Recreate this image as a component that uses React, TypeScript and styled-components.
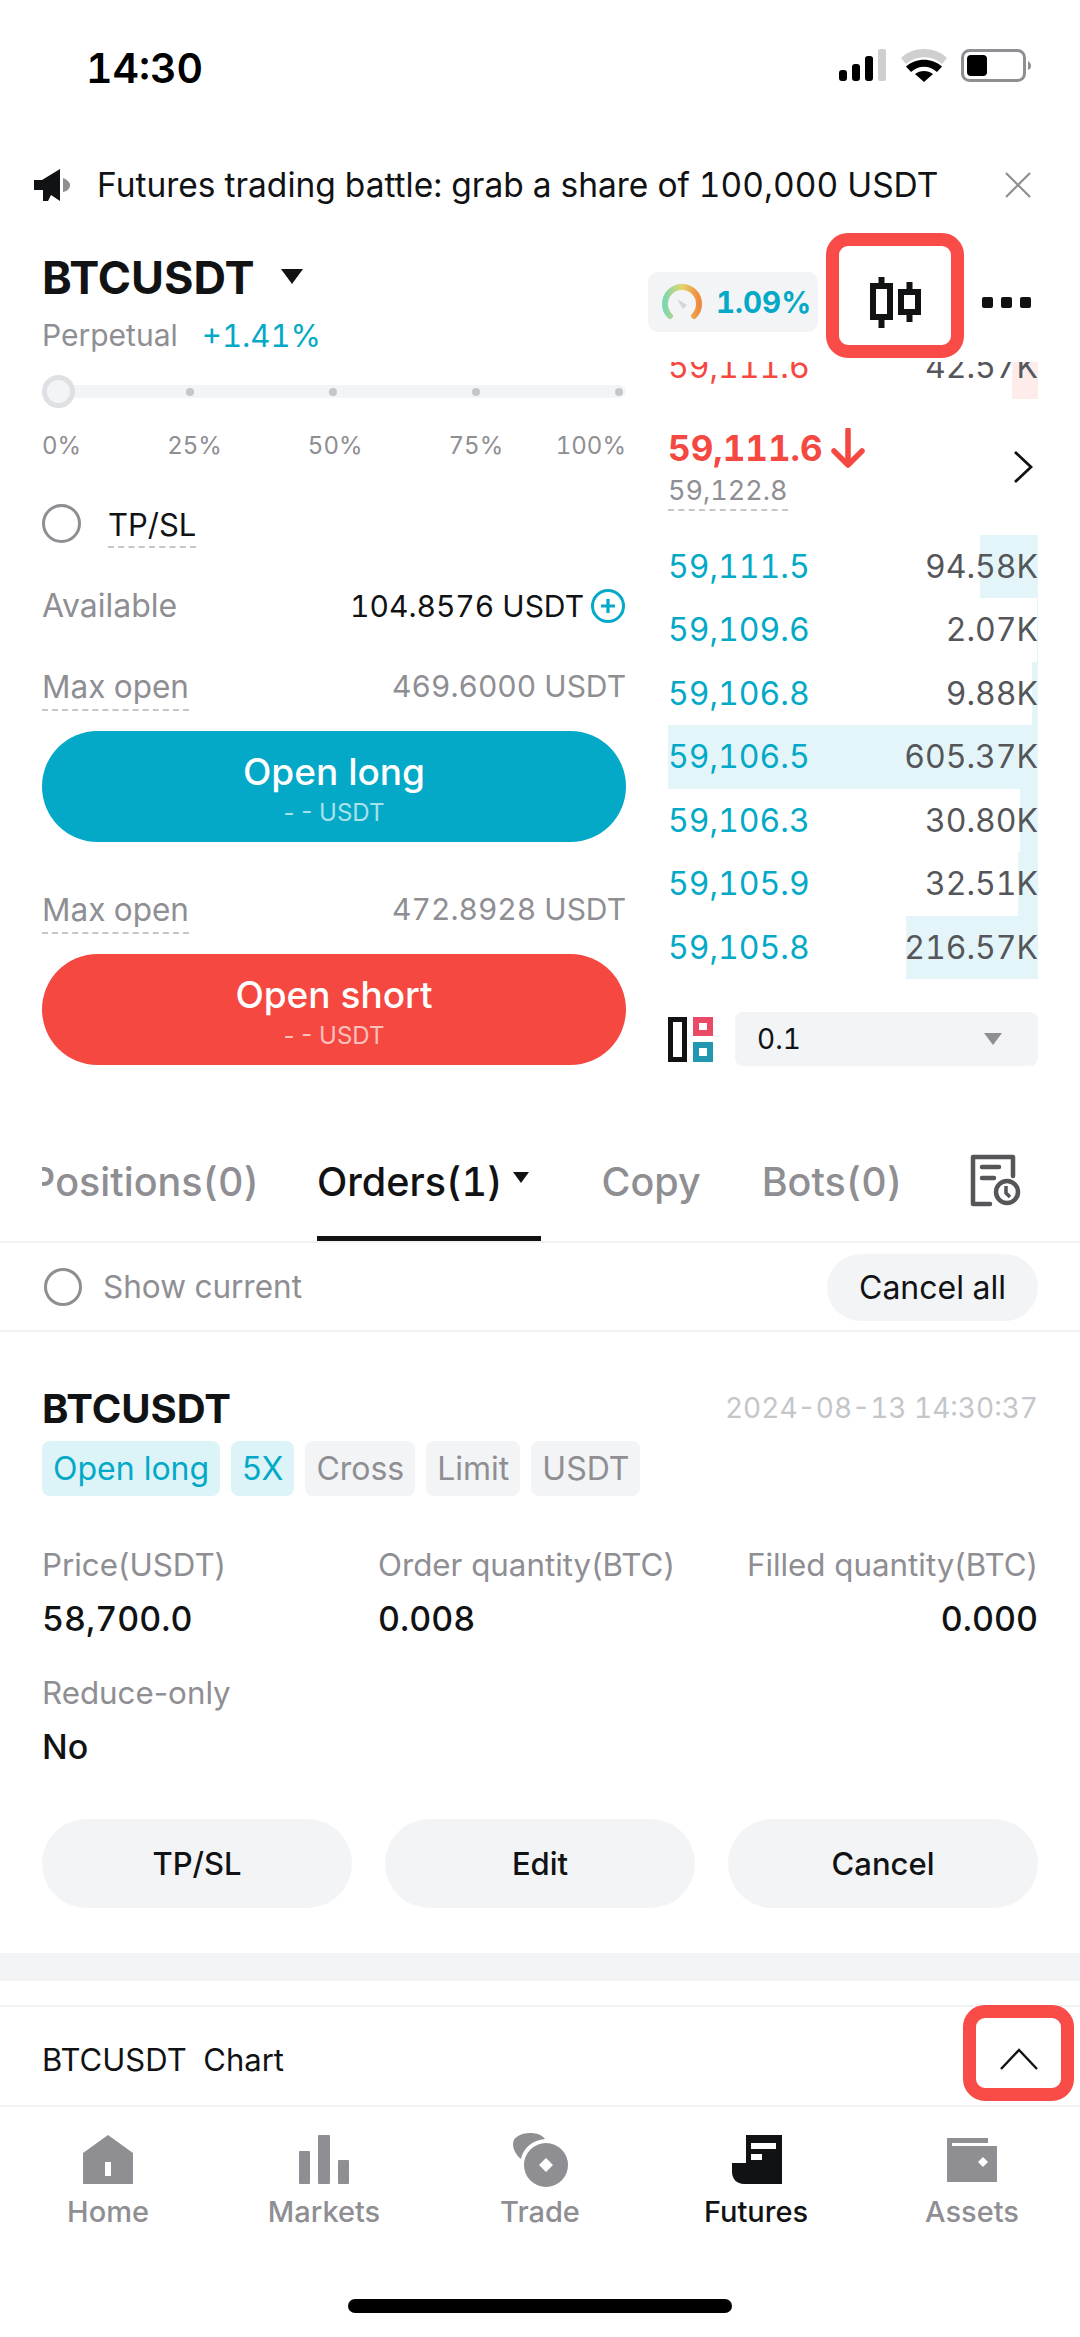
import styled, { createGlobalStyle } from "styled-components";

const GlobalStyle = createGlobalStyle`
  html, body {
    margin: 0;
    padding: 0;
    background: #fff;
  }
  * {
    box-sizing: border-box;
  }
`;

const BLACK = "#111214";
const GRAY = "#8e8e93";
const TEAL = "#03a9c7";
const RED = "#f44840";
const SOFT = "#f3f4f6";

const Page = styled.div`
  width: 1080px;
  height: 2337px;
  overflow: hidden;
  display: flex;
  flex-direction: column;
  background: #fff;
  color: ${BLACK};
  font-family: Inter, "Liberation Sans", sans-serif;
  font-variant-numeric: tabular-nums;
`;

/* Status bar */
const StatusBar = styled.div`
  height: 136px;
  flex-shrink: 0;
  display: flex;
  justify-content: space-between;
  align-items: flex-start;
  padding: 44px 49px 0 86px;
`;

const Clock = styled.div`
  font-size: 41px;
  line-height: 48px;
  font-weight: 600;
  color: #000;
`;

const StatusIcons = styled.svg`
  width: 194px;
  height: 40px;
  margin-top: 5px;
`;

/* Banner */
const Banner = styled.div`
  height: 98px;
  flex-shrink: 0;
  display: flex;
  align-items: center;
  padding: 0 49px 0 34px;
  gap: 27px;
`;

const BannerText = styled.div`
  flex: 1;
  font-size: 33.5px;
  white-space: nowrap;
`;

/* Trade area */
const TradeGrid = styled.div`
  height: 896px;
  flex-shrink: 0;
  display: grid;
  grid-template-columns: 584px 370px;
  column-gap: 42px;
  padding: 0 42px;
`;

const LeftColumn = styled.div`
  display: flex;
  flex-direction: column;
`;

const TitleRow = styled.div`
  height: 86px;
  display: flex;
  align-items: center;
  gap: 26px;
`;

const Symbol = styled.div`
  font-size: 45px;
  font-weight: 700;
`;

const Caret = styled.span<{ $size: number; $color?: string; $top?: number }>`
  width: 0;
  height: 0;
  margin-top: ${(p) => p.$top ?? 0}px;
  border-left: ${(p) => p.$size}px solid transparent;
  border-right: ${(p) => p.$size}px solid transparent;
  border-top: ${(p) => p.$size * 1.4}px solid ${(p) => p.$color ?? BLACK};
  flex-shrink: 0;
`;

const PerpRow = styled.div`
  height: 30px;
  display: flex;
  align-items: center;
  gap: 24px;
  font-size: 30px;
  color: ${GRAY};
`;

const Change = styled.span`
  font-size: 31px;
  color: ${TEAL};
`;

const Slider = styled.div`
  margin-top: 25px;
  height: 33px;
  position: relative;
  display: flex;
  align-items: center;
  justify-content: flex-end;
  padding-right: 3px;
  gap: 135px;
  &::before {
    content: "";
    position: absolute;
    left: 0;
    right: 0;
    top: 10px;
    height: 13px;
    border-radius: 7px;
    background: ${SOFT};
  }
`;

const SliderThumb = styled.span`
  position: absolute;
  left: 0;
  top: 0;
  width: 33px;
  height: 33px;
  border-radius: 50%;
  background: ${SOFT};
  border: 5px solid #dfe0e3;
`;

const SliderDot = styled.span`
  position: relative;
  width: 8px;
  height: 8px;
  border-radius: 50%;
  background: #c4c6ca;
`;

const SliderLabels = styled.div`
  margin-top: 22px;
  height: 30px;
  display: flex;
  align-items: center;
  font-size: 24px;
  color: ${GRAY};
  span + span {
    margin-left: 86px;
  }
  span:last-child {
    margin-left: auto;
  }
`;

const TpRow = styled.div`
  margin-top: 44px;
  height: 44px;
  display: flex;
  align-items: flex-start;
  gap: 27px;
`;

const Radio = styled.span<{ $size: number }>`
  width: ${(p) => p.$size}px;
  height: ${(p) => p.$size}px;
  border-radius: 50%;
  border: 3px solid ${GRAY};
  flex-shrink: 0;
`;

const Dashed = styled.span<{ $color?: string; $size: number; $height: number }>`
  display: inline-block;
  height: ${(p) => p.$height}px;
  line-height: ${(p) => p.$height - 2}px;
  font-size: ${(p) => p.$size}px;
  color: ${(p) => p.$color ?? BLACK};
  border-bottom: 2px dashed #c4c6ca;
`;

const InfoRow = styled.div<{ $top: number }>`
  margin-top: ${(p) => p.$top}px;
  min-height: 40px;
  display: flex;
  justify-content: space-between;
  align-items: flex-start;
  font-size: 30px;
  line-height: 42px;
  color: ${GRAY};
`;

const InfoLabel = styled.span`
  font-size: 32px;
`;

const Balance = styled.span`
  display: flex;
  align-items: center;
  gap: 6px;
  color: ${BLACK};
`;

const OpenButton = styled.div<{ $bg: string; $top: number }>`
  margin-top: ${(p) => p.$top}px;
  height: 111px;
  border-radius: 56px;
  background: ${(p) => p.$bg};
  color: #fff;
  display: flex;
  flex-direction: column;
  align-items: center;
  padding-top: 18px;
`;

const OpenLabel = styled.div`
  font-size: 37px;
  line-height: 46px;
  font-weight: 500;
`;

const OpenSub = styled.div`
  font-size: 24px;
  line-height: 30px;
  margin-top: 3px;
  opacity: 0.65;
  font-variant-numeric: normal;
`;

/* Order book */
const RightColumn = styled.div`
  display: flex;
  flex-direction: column;
`;

const Toolbar = styled.div`
  height: 128px;
  margin-left: -20px;
  padding-top: 8px;
  display: flex;
  align-items: center;
`;

const FundingChip = styled.div`
  width: 170px;
  height: 60px;
  border-radius: 10px;
  background: ${SOFT};
  display: flex;
  align-items: center;
  gap: 14px;
  padding-left: 14px;
  font-size: 29.5px;
  font-weight: 700;
  color: ${TEAL};
`;

const CandleSlot = styled.div`
  position: relative;
  width: 138px;
  height: 60px;
  margin-left: 8px;
  display: flex;
  align-items: center;
  justify-content: center;
`;

const Highlight = styled.span<{ $top: number; $bottom: number }>`
  position: absolute;
  left: 0;
  right: 0;
  top: ${(p) => p.$top}px;
  bottom: ${(p) => p.$bottom}px;
  border: 13px solid #f94c48;
  border-radius: 22px;
`;

const MoreDots = styled.div`
  margin-left: 18px;
  display: flex;
  gap: 8px;
  span {
    width: 11px;
    height: 11px;
    border-radius: 2px;
    background: ${BLACK};
  }
`;

const Book = styled.div`
  height: 617px;
  overflow: hidden;
  display: flex;
  flex-direction: column;
  justify-content: flex-end;
`;

const BookRow = styled.div<{ $depth: number; $bar: string }>`
  height: 63.5px;
  flex-shrink: 0;
  display: flex;
  justify-content: space-between;
  align-items: center;
  font-size: 32px;
  color: #55565a;
  background: linear-gradient(
    to left,
    ${(p) => p.$bar} ${(p) => p.$depth}px,
    transparent ${(p) => p.$depth}px
  );
`;

const BookPrice = styled.span<{ $color: string }>`
  color: ${(p) => p.$color};
`;

const MidBlock = styled.div`
  height: 136px;
  flex-shrink: 0;
  display: flex;
  justify-content: space-between;
  align-items: center;
  padding-right: 5px;
`;

const MidLeft = styled.div`
  display: flex;
  flex-direction: column;
  align-items: flex-start;
`;

const MidPrice = styled.div`
  display: flex;
  align-items: center;
  gap: 8px;
  height: 50px;
  font-size: 35px;
  font-weight: 700;
  color: ${RED};
`;

const DepthSelect = styled.div`
  margin-top: 33px;
  display: flex;
  align-items: center;
  gap: 22px;
`;

const SelectBox = styled.div`
  flex: 1;
  height: 54px;
  border-radius: 8px;
  background: ${SOFT};
  display: flex;
  align-items: center;
  justify-content: space-between;
  padding: 0 36px 0 22px;
  font-size: 28px;
`;

/* Tabs */
const Tabs = styled.div`
  height: 113px;
  flex-shrink: 0;
  display: flex;
  border-bottom: 2px solid #f1f2f4;
  padding: 0 58px 0 42px;
  overflow: hidden;
  align-items: flex-start;
`;

const Tab = styled.div<{ $active?: boolean; $left: number }>`
  height: 111px;
  margin-left: ${(p) => p.$left}px;
  padding-top: 27px;
  padding-right: ${(p) => (p.$active ? 12 : 0)}px;
  display: flex;
  align-items: flex-start;
  gap: 11px;
  font-size: 39.5px;
  line-height: 50px;
  font-weight: 500;
  white-space: nowrap;
  flex-shrink: 0;
  color: ${(p) => (p.$active ? BLACK : GRAY)};
  border-bottom: 5px solid ${(p) => (p.$active ? BLACK : "transparent")};
`;

const TabClip = styled.div`
  width: 217px;
  flex-shrink: 0;
  overflow: hidden;
  display: flex;
  justify-content: flex-end;
`;

const TabIcon = styled.svg`
  width: 54px;
  height: 54px;
  margin: 24px 0 0 auto;
  flex-shrink: 0;
`;

const FilterRow = styled.div`
  height: 89px;
  flex-shrink: 0;
  display: flex;
  align-items: center;
  justify-content: space-between;
  border-bottom: 2px solid #f1f2f4;
  padding: 0 42px 0 44px;
`;

const ShowCurrent = styled.div`
  display: flex;
  align-items: center;
  gap: 21px;
  font-size: 31.5px;
  color: ${GRAY};
`;

const CancelAll = styled.div`
  width: 211px;
  height: 67px;
  margin-top: 2px;
  border-radius: 34px;
  background: ${SOFT};
  display: flex;
  align-items: center;
  justify-content: center;
  font-size: 32px;
`;

/* Order card */
const OrderCard = styled.div`
  padding: 51px 42px 0;
  flex-shrink: 0;
`;

const OrderHead = styled.div`
  height: 50px;
  display: flex;
  justify-content: space-between;
  align-items: center;
`;

const OrderSymbol = styled.div`
  font-size: 40px;
  font-weight: 700;
`;

const OrderTime = styled.div`
  font-size: 28px;
  color: #c4c6ca;
`;

const TagRow = styled.div`
  margin-top: 8px;
  display: flex;
  gap: 11px;
`;

const Tag = styled.span<{ $accent?: boolean }>`
  height: 55px;
  padding: 0 11px;
  border-radius: 8px;
  display: flex;
  align-items: center;
  font-size: 32px;
  font-variant-numeric: normal;
  background: ${(p) => (p.$accent ? "#dcf3f7" : SOFT)};
  color: ${(p) => (p.$accent ? TEAL : GRAY)};
`;

const DetailGrid = styled.div`
  margin-top: 49px;
  display: grid;
  grid-template-columns: 336px 1fr auto;
  row-gap: 34px;
`;

const Detail = styled.div<{ $right?: boolean }>`
  display: flex;
  flex-direction: column;
  gap: 14px;
  align-items: ${(p) => (p.$right ? "flex-end" : "flex-start")};
`;

const DetailLabel = styled.div`
  font-size: 31.3px;
  line-height: 40px;
  color: ${GRAY};
  font-variant-numeric: normal;
`;

const DetailValue = styled.div`
  font-size: 34px;
  line-height: 40px;
  font-weight: 500;
`;

const ActionRow = styled.div`
  margin-top: 52px;
  display: grid;
  grid-template-columns: repeat(3, 310px);
  justify-content: space-between;
`;

const ActionButton = styled.div`
  height: 89px;
  border-radius: 45px;
  background: ${SOFT};
  display: flex;
  align-items: center;
  justify-content: center;
  font-size: 31px;
  font-weight: 500;
`;

const Band = styled.div`
  margin-top: 45px;
  height: 28px;
  flex-shrink: 0;
  background: ${SOFT};
`;

const ChartRow = styled.div`
  margin-top: 24px;
  height: 102px;
  flex-shrink: 0;
  border-top: 2px solid #f1f2f4;
  border-bottom: 2px solid #f1f2f4;
  display: flex;
  align-items: center;
  justify-content: space-between;
  padding: 6px 6px 0 42px;
  font-size: 31px;
  white-space: pre;
`;

const ChevronSlot = styled.div`
  position: relative;
  width: 111px;
  height: 60px;
  display: flex;
  align-items: center;
  justify-content: center;
`;

/* Bottom navigation */
const Nav = styled.div`
  display: grid;
  grid-template-columns: repeat(5, 216px);
  padding-top: 23px;
  flex-shrink: 0;
`;

const NavItem = styled.div<{ $active?: boolean }>`
  display: flex;
  flex-direction: column;
  align-items: center;
  gap: 7px;
  font-size: 29px;
  line-height: 30px;
  font-weight: 500;
  color: ${(p) => (p.$active ? BLACK : GRAY)};
  svg {
    width: 60px;
    height: 60px;
    fill: currentColor;
  }
`;

const HomeBar = styled.div`
  width: 384px;
  height: 14px;
  border-radius: 7px;
  background: #000;
  margin: auto auto 24px;
`;

const asks = [{ price: "59,111.6", size: "42.57K", depth: 26 }];

const bids = [
  { price: "59,111.5", size: "94.58K", depth: 58 },
  { price: "59,109.6", size: "2.07K", depth: 1 },
  { price: "59,106.8", size: "9.88K", depth: 6 },
  { price: "59,106.5", size: "605.37K", depth: 370 },
  { price: "59,106.3", size: "30.80K", depth: 18 },
  { price: "59,105.9", size: "32.51K", depth: 20 },
  { price: "59,105.8", size: "216.57K", depth: 132 },
];

const tags = ["Cross", "Limit", "USDT"];

function SignalWifiBattery() {
  return (
    <StatusIcons viewBox="0 0 194 40">
      <rect x="2" y="21" width="8" height="11" rx="3" fill="#000" />
      <rect x="15" y="15" width="8" height="17" rx="3" fill="#000" />
      <rect x="28" y="7" width="8" height="25" rx="3" fill="#000" />
      <rect x="41" y="0" width="8" height="32" rx="2" fill="#cfcfcf" />
      <path d="M64 9 C76 -3 98 -3 110 9 L105 15 C95 6 79 6 69 15 Z" fill="#cfcfcf" />
      <path d="M69 15.5 C79 6.5 95 6.5 105 15.5 L100 21 C92 14 82 14 74 21 Z" fill="#000" transform="translate(0 2)" />
      <path d="M78 25 C83 21 91 21 96 25 L87 33 Z" fill="#000" />
      <rect x="125.5" y="1.5" width="62" height="30" rx="7" fill="none" stroke="#8e8e93" strokeWidth="3" />
      <rect x="130" y="6" width="20" height="21" rx="4" fill="#000" />
      <path d="M191 12 C193 13 194 15 194 17 C194 19 193 20 191 21 Z" fill="#8e8e93" />
    </StatusIcons>
  );
}

export default function App() {
  return (
    <>
      <GlobalStyle />
      <Page>
        <StatusBar>
          <Clock>14:30</Clock>
          <SignalWifiBattery />
        </StatusBar>

        <Banner>
          <svg width="36" height="32" viewBox="0 0 36 32">
            <path d="M0 11 H8 L26 0 V32 L17 26 L14 32 H9 L9 21 H0 Z" fill="#111214" />
            <path d="M29 9 C34 11 36 14 36 16 C36 19 34 22 29 23 Z" fill="#8e8e93" />
          </svg>
          <BannerText>Futures trading battle: grab a share of 100,000 USDT</BannerText>
          <svg width="26" height="26" viewBox="0 0 26 26">
            <path d="M1 1 L25 25 M25 1 L1 25" stroke="#8e8e93" strokeWidth="2.2" fill="none" />
          </svg>
        </Banner>

        <TradeGrid>
          <LeftColumn>
            <TitleRow>
              <Symbol>BTCUSDT</Symbol>
              <Caret $size={11} $top={-2} />
            </TitleRow>
            <PerpRow>
              Perpetual <Change>+1.41%</Change>
            </PerpRow>
            <Slider>
              <SliderThumb />
              <SliderDot />
              <SliderDot />
              <SliderDot />
              <SliderDot />
            </Slider>
            <SliderLabels>
              <span>0%</span>
              <span>25%</span>
              <span>50%</span>
              <span>75%</span>
              <span>100%</span>
            </SliderLabels>
            <TpRow>
              <Radio $size={39} />
              <Dashed $size={31} $height={44}>
                TP/SL
              </Dashed>
            </TpRow>
            <InfoRow $top={37}>
              <InfoLabel>Available</InfoLabel>
              <Balance>
                104.8576 USDT
                <svg width="36" height="36" viewBox="0 0 36 36">
                  <circle cx="18" cy="18" r="15.5" fill="none" stroke={TEAL} strokeWidth="3" />
                  <path d="M11 18 H25 M18 11 V25" stroke={TEAL} strokeWidth="3.2" />
                </svg>
              </Balance>
            </InfoRow>
            <InfoRow $top={38}>
              <Dashed $size={31.5} $height={46} $color={GRAY}>
                Max open
              </Dashed>
              469.6000 USDT
            </InfoRow>
            <OpenButton $bg={TEAL} $top={20}>
              <OpenLabel>Open long</OpenLabel>
              <OpenSub>- - USDT</OpenSub>
            </OpenButton>
            <InfoRow $top={46}>
              <Dashed $size={31.5} $height={46} $color={GRAY}>
                Max open
              </Dashed>
              472.8928 USDT
            </InfoRow>
            <OpenButton $bg={RED} $top={20}>
              <OpenLabel>Open short</OpenLabel>
              <OpenSub>- - USDT</OpenSub>
            </OpenButton>
          </LeftColumn>

          <RightColumn>
            <Toolbar>
              <FundingChip>
                <svg width="40" height="36" viewBox="0 0 40 36">
                  <defs>
                    <linearGradient id="gauge" x1="0" y1="0" x2="1" y2="0">
                      <stop offset="0" stopColor="#7fd6b0" />
                      <stop offset="0.5" stopColor="#e6d56a" />
                      <stop offset="1" stopColor="#ef8a3c" />
                    </linearGradient>
                  </defs>
                  <path
                    d="M8 32 A17 17 0 1 1 32 32"
                    fill="none"
                    stroke="url(#gauge)"
                    strokeWidth="6"
                    strokeLinecap="round"
                  />
                  <path d="M15 15 L25 21 L21 25 Z" fill="#d4d5d8" />
                </svg>
                1.09%
              </FundingChip>
              <CandleSlot>
                <svg width="51" height="51" viewBox="0 0 51 51">
                  <rect x="3" y="9" width="17" height="31" fill="none" stroke="#111214" strokeWidth="6" />
                  <path d="M11.5 0 V9 M11.5 40 V51" stroke="#111214" strokeWidth="6" />
                  <rect x="31" y="15" width="17" height="20" fill="none" stroke="#111214" strokeWidth="6" />
                  <path d="M39.5 5 V15 M39.5 35 V45" stroke="#111214" strokeWidth="6" />
                </svg>
                <Highlight $top={-39} $bottom={-26} />
              </CandleSlot>
              <MoreDots>
                <span />
                <span />
                <span />
              </MoreDots>
            </Toolbar>

            <Book>
              {asks.map((row) => (
                <BookRow key={row.price} $depth={row.depth} $bar="#fdecea">
                  <BookPrice $color={RED}>{row.price}</BookPrice>
                  {row.size}
                </BookRow>
              ))}
              <MidBlock>
                <MidLeft>
                  <MidPrice>
                    59,111.6
                    <svg width="34" height="40" viewBox="0 0 34 40">
                      <path
                        d="M17 2 V36 M3 23 L17 37 L31 23"
                        fill="none"
                        stroke={RED}
                        strokeWidth="5.5"
                        strokeLinecap="round"
                        strokeLinejoin="round"
                      />
                    </svg>
                  </MidPrice>
                  <Dashed $size={27} $height={38} $color={GRAY}>
                    59,122.8
                  </Dashed>
                </MidLeft>
                <svg width="20" height="34" viewBox="0 0 20 34">
                  <path d="M2 2 L18 17 L2 32" fill="none" stroke="#111214" strokeWidth="2.8" />
                </svg>
              </MidBlock>
              {bids.map((row) => (
                <BookRow key={row.price} $depth={row.depth} $bar="#e4f5f9">
                  <BookPrice $color={TEAL}>{row.price}</BookPrice>
                  {row.size}
                </BookRow>
              ))}
            </Book>

            <DepthSelect>
              <svg width="45" height="45" viewBox="0 0 45 45">
                <rect x="2.5" y="2.5" width="14" height="40" fill="#fff" stroke="#111214" strokeWidth="5" />
                <rect x="25" y="0" width="20" height="19" fill="#ea4a66" />
                <rect x="31" y="6" width="8" height="7" fill="#fff" />
                <rect x="25" y="25" width="20" height="20" fill="#2298b0" />
                <rect x="31" y="31" width="8" height="8" fill="#fff" />
              </svg>
              <SelectBox>
                0.1
                <Caret $size={9} $color={GRAY} />
              </SelectBox>
            </DepthSelect>
          </RightColumn>
        </TradeGrid>

        <Tabs>
          <TabClip>
            <Tab $left={0}>Positions(0)</Tab>
          </TabClip>
          <Tab $active $left={58}>
            Orders(1)
            <Caret $size={8.5} $top={15} />
          </Tab>
          <Tab $left={60}>Copy</Tab>
          <Tab $left={61}>Bots(0)</Tab>
          <TabIcon viewBox="0 0 54 54">
            <path
              d="M22 50 H5 V3 H45 V22"
              fill="none"
              stroke="#55565a"
              strokeWidth="4.5"
              strokeLinecap="round"
              strokeLinejoin="round"
            />
            <path d="M14 13 H31 M14 24 H26" stroke="#55565a" strokeWidth="4.5" strokeLinecap="round" />
            <circle cx="39" cy="38" r="11" fill="#fff" stroke="#55565a" strokeWidth="4.5" />
            <path d="M38 32 V39 L42 43" fill="none" stroke="#55565a" strokeWidth="3.5" />
          </TabIcon>
        </Tabs>

        <FilterRow>
          <ShowCurrent>
            <Radio $size={38} />
            Show current
          </ShowCurrent>
          <CancelAll>Cancel all</CancelAll>
        </FilterRow>

        <OrderCard>
          <OrderHead>
            <OrderSymbol>BTCUSDT</OrderSymbol>
            <OrderTime>2024-08-13 14:30:37</OrderTime>
          </OrderHead>
          <TagRow>
            <Tag $accent>Open long</Tag>
            <Tag $accent>5X</Tag>
            {tags.map((tag) => (
              <Tag key={tag}>{tag}</Tag>
            ))}
          </TagRow>
          <DetailGrid>
            <Detail>
              <DetailLabel>Price(USDT)</DetailLabel>
              <DetailValue>58,700.0</DetailValue>
            </Detail>
            <Detail>
              <DetailLabel>Order quantity(BTC)</DetailLabel>
              <DetailValue>0.008</DetailValue>
            </Detail>
            <Detail $right>
              <DetailLabel>Filled quantity(BTC)</DetailLabel>
              <DetailValue>0.000</DetailValue>
            </Detail>
            <Detail>
              <DetailLabel>Reduce-only</DetailLabel>
              <DetailValue>No</DetailValue>
            </Detail>
          </DetailGrid>
          <ActionRow>
            <ActionButton>TP/SL</ActionButton>
            <ActionButton>Edit</ActionButton>
            <ActionButton>Cancel</ActionButton>
          </ActionRow>
        </OrderCard>

        <Band />

        <ChartRow>
          {"BTCUSDT  Chart"}
          <ChevronSlot>
            <svg width="38" height="22" viewBox="0 0 38 22">
              <path d="M1 21 L19 2 L37 21" fill="none" stroke="#111214" strokeWidth="2.4" />
            </svg>
            <Highlight $top={-24} $bottom={-12} />
          </ChevronSlot>
        </ChartRow>

        <Nav>
          <NavItem>
            <svg viewBox="0 0 60 60">
              <path d="M30 5 L55 23 V54 H5 V23 Z" />
              <rect x="27" y="32" width="6" height="14" fill="#fff" />
            </svg>
            Home
          </NavItem>
          <NavItem>
            <svg viewBox="0 0 60 60">
              <rect x="5" y="21" width="11" height="33" rx="1" />
              <rect x="24" y="5" width="12" height="49" rx="1" />
              <rect x="44" y="30" width="11" height="24" rx="1" />
            </svg>
            Markets
          </NavItem>
          <NavItem>
            <svg viewBox="0 0 60 60">
              <path d="M20 3 C27 3 32 5 35 9 C23 10 13 18 11 29 C6 25 3 19 3 14 C3 7 11 3 20 3 Z" />
              <circle cx="36" cy="35" r="22" />
              <path d="M36 28 L43 35 L36 42 L29 35 Z" fill="#fff" />
            </svg>
            Trade
          </NavItem>
          <NavItem $active>
            <svg viewBox="0 0 60 60">
              <path d="M20 5 H56 V54 H18 C11 54 6 49 6 42 V33 H20 Z" />
              <rect x="25" y="13" width="25" height="6" fill="#fff" />
              <rect x="25" y="24" width="11" height="6" fill="#fff" />
            </svg>
            Futures
          </NavItem>
          <NavItem>
            <svg viewBox="0 0 60 60">
              <path d="M5 8 H46 V13 H10 V16 H55 V52 H5 Z" />
              <path d="M41 27 L46 32 L41 37 L36 32 Z" fill="#fff" />
            </svg>
            Assets
          </NavItem>
        </Nav>

        <HomeBar />
      </Page>
    </>
  );
}
